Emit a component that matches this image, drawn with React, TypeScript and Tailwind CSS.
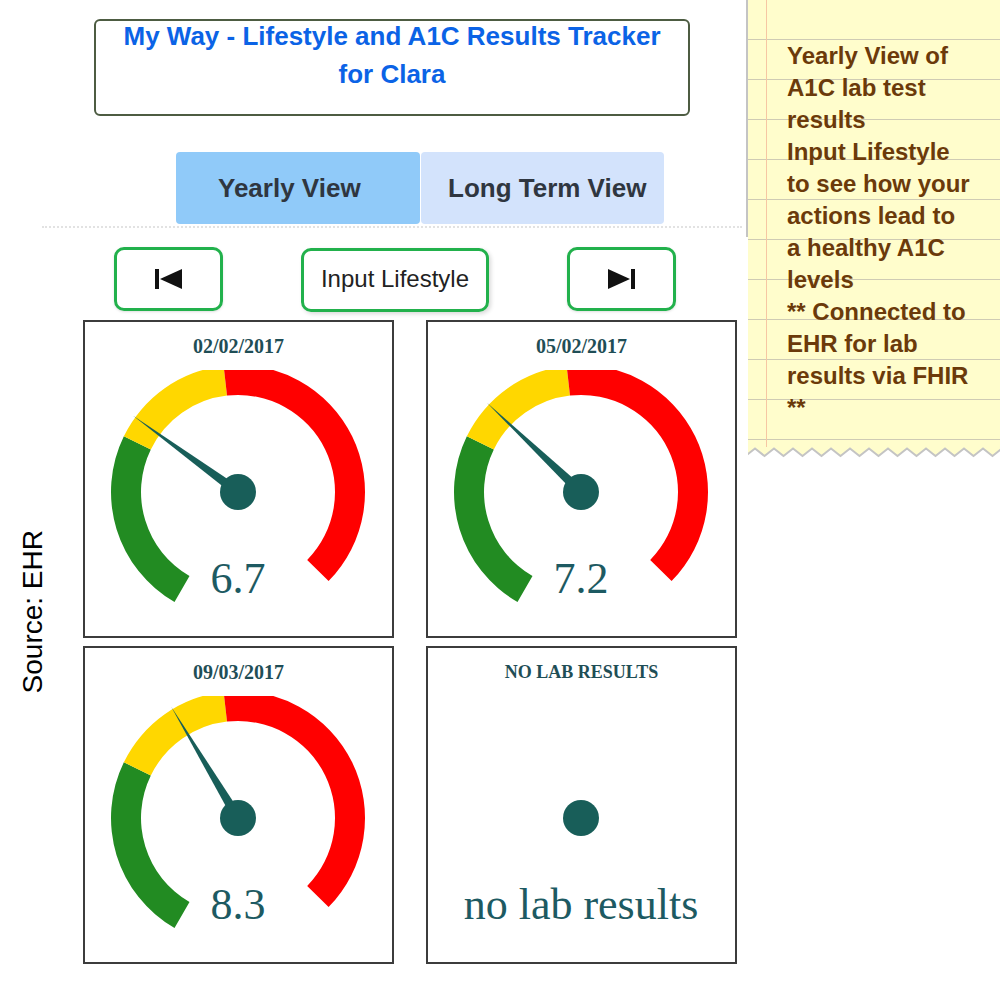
import React from "react";

const HUB = { x: 153, y: 122 };

function pt(r: number, deg: number): [number, number] {
  const t = (deg * Math.PI) / 180;
  return [HUB.x + r * Math.sin(t), HUB.y - r * Math.cos(t)];
}

function band(a1: number, a2: number, r1 = 97, r2 = 127) {
  const [x1, y1] = pt(r2, a1);
  const [x2, y2] = pt(r2, a2);
  const [x3, y3] = pt(r1, a2);
  const [x4, y4] = pt(r1, a1);
  const large = a2 - a1 > 180 ? 1 : 0;
  return `M${x1} ${y1} A${r2} ${r2} 0 ${large} 1 ${x2} ${y2} L${x3} ${y3} A${r1} ${r1} 0 ${large} 0 ${x4} ${y4} Z`;
}

function needle(a: number) {
  const [tx, ty] = pt(130, a);
  const [bx1, by1] = pt(5, a - 90);
  const [bx2, by2] = pt(5, a + 90);
  return `${tx},${ty} ${bx1},${by1} ${bx2},${by2}`;
}

type GaugeProps = { title: string; value: string; angle: number | null };

function GaugeCard({ title, value, angle }: GaugeProps) {
  return (
    <div className="w-[311px] h-[318px] border-2 border-[#3c3c3c] bg-white flex flex-col font-['Liberation_Serif','Times_New_Roman',serif]">
      <div
        className={`h-[48px] pt-[14px] text-center font-bold leading-[20px] text-[#1f4e56] ${
          angle === null ? "text-[18px]" : "text-[20px]"
        }`}
      >
        {title}
      </div>
      <svg width="307" height="266" viewBox="0 0 307 266">
        {angle !== null && (
          <>
            <path d={band(-150, -64)} fill="#228b22" />
            <path d={band(-64, -6.5)} fill="#ffd700" />
            <path d={band(-6.5, 134.5)} fill="#ff0000" />
            <polygon points={needle(angle)} fill="#185e59" />
          </>
        )}
        <circle cx={HUB.x} cy={HUB.y} r="18" fill="#185e59" />
        <text
          x={HUB.x}
          y="223"
          textAnchor="middle"
          fontSize="44"
          fill="#1d5a62"
          fontFamily="'Liberation Serif','Times New Roman',serif"
        >
          {value}
        </text>
      </svg>
    </div>
  );
}

function PrevIcon() {
  return (
    <svg width="27" height="20" viewBox="0 0 27 20">
      <rect x="0" y="0" width="4" height="20" fill="#111" />
      <polygon points="5,10 27,0 27,20" fill="#111" />
    </svg>
  );
}

function NextIcon() {
  return (
    <svg width="27" height="20" viewBox="0 0 27 20">
      <polygon points="0,0 22,10 0,20" fill="#111" />
      <rect x="23" y="0" width="4" height="20" fill="#111" />
    </svg>
  );
}

function Zigzag() {
  const pts: string[] = [];
  for (let i = -1; i < 15; i++) {
    const px = 7 + 19 * i;
    pts.push(`${px},1.5`);
    pts.push(`${px + 9.5},9`);
  }
  const zig = pts.join(" ");
  return (
    <svg width="252" height="11" viewBox="0 0 252 11">
      <polygon points={`0,0 ${zig} 252,0`} fill="#fffdcc" />
      <polyline points={zig} fill="none" stroke="#c4c4c4" strokeWidth="2" />
    </svg>
  );
}

const noteLines = [
  "Yearly View of",
  "A1C lab test",
  "results",
  "Input Lifestyle",
  "to see how your",
  "actions lead to",
  "a healthy A1C",
  "levels",
  "** Connected to",
  "EHR for lab",
  "results via FHIR",
  "**",
];

export default function App() {
  return (
    <div className="w-[1000px] h-[1000px] bg-white flex overflow-hidden font-['Liberation_Sans',Arial,sans-serif]">
      {/* Left main column */}
      <div className="w-[746px] flex flex-col shrink-0">
        {/* Title */}
        <div className="mt-[19px] ml-[94px] w-[596px] h-[97px] border-2 border-[#4d5c42] rounded-[6px] flex flex-col items-center">
          <div className="-mt-[4px] text-[26px] leading-[38px] font-bold text-[#0b63e6] text-center">
            <div>My Way - Lifestyle and A1C Results Tracker</div>
            <div>for Clara</div>
          </div>
        </div>

        {/* Tabs */}
        <div className="mt-[36px] ml-[176px] flex gap-[1px]">
          <div className="w-[244px] h-[72px] bg-[#90caf9] rounded-[4px] flex items-center pl-[42px] text-[26px] font-bold text-[#2f3640]">
            Yearly View
          </div>
          <div className="w-[243px] h-[72px] bg-[#d3e3fc] rounded-[4px] flex items-center pl-[27px] text-[26px] font-bold text-[#2f3640]">
            Long Term View
          </div>
        </div>

        {/* Dotted separator */}
        <div className="mt-[2px] ml-[42px] w-[700px] border-t-2 border-dotted border-[#e2e2e2]" />

        {/* Buttons */}
        <div className="mt-[19px] ml-[114px] flex items-start gap-[78px]">
          <div className="w-[109px] h-[64px] border-[3px] border-[#22b14c] rounded-[10px] flex items-center justify-center shadow-sm">
            <PrevIcon />
          </div>
          <div className="mt-[1px] w-[188px] h-[64px] border-[3px] border-[#22b14c] rounded-[10px] flex items-center justify-center pb-[3px] text-[24px] text-[#222] shadow-[2px_2px_4px_rgba(0,0,0,0.15)]">
            Input Lifestyle
          </div>
          <div className="w-[109px] h-[64px] border-[3px] border-[#22b14c] rounded-[10px] flex items-center justify-center shadow-sm">
            <NextIcon />
          </div>
        </div>

        {/* Cards area */}
        <div className="mt-[8px] flex">
          <div className="w-[83px] pt-[210px]">
            <div className="ml-[19px] [writing-mode:vertical-rl] rotate-180 text-[28px] leading-[28px] text-black whitespace-nowrap">
              Source: EHR
            </div>
          </div>
          <div className="grid grid-cols-[311px_311px] gap-x-[32px] gap-y-[8px]">
            <GaugeCard title="02/02/2017" value="6.7" angle={-54} />
            <GaugeCard title="05/02/2017" value="7.2" angle={-46.5} />
            <GaugeCard title="09/03/2017" value="8.3" angle={-31} />
            <GaugeCard title="NO LAB RESULTS" value="no lab results" angle={null} />
          </div>
        </div>
      </div>

      {/* Right note column */}
      <div className="flex items-start">
        <div className="w-[2px] h-[237px] bg-[#c4c4c4]" />
        <div className="w-[252px] flex flex-col">
          <div className="h-[447px] flex bg-[#fffdcc] bg-[image:repeating-linear-gradient(to_bottom,transparent_0px,transparent_39px,#cfcbb4_39px,#cfcbb4_40px)]">
            <div className="w-[18px]" />
            <div className="w-[1px] bg-[#f6c7a3]" />
            <div className="pl-[20px] pt-[40px] text-[24px] leading-[32px] font-bold text-[#6b3a0a] whitespace-nowrap">
              {noteLines.map((l, i) => (
                <div key={i}>{l}</div>
              ))}
            </div>
          </div>
          <Zigzag />
        </div>
      </div>
    </div>
  );
}
